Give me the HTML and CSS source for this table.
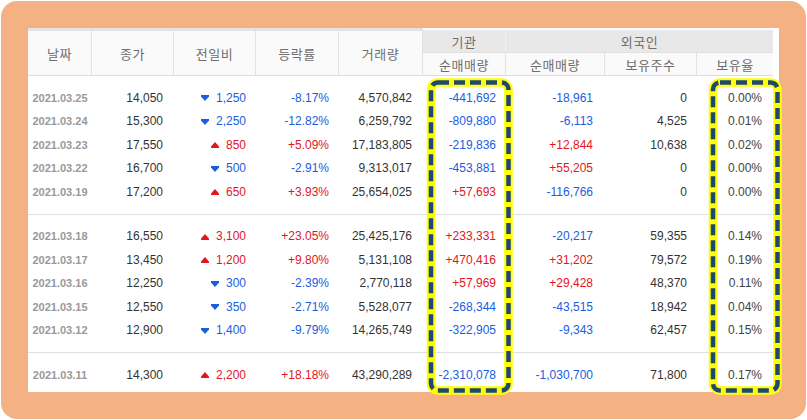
FILE: index.html
```html
<!DOCTYPE html>
<html lang="ko">
<head>
<meta charset="utf-8">
<title>외국인 기관 매매</title>
<link rel="stylesheet" href="styles.css">
</head>
<body>
<div class="frame">
  <div class="panel">
    <div class="table">
      <div class="head">
        <div class="hc span">날짜</div>
        <div class="hc span">종가</div>
        <div class="hc span">전일비</div>
        <div class="hc span">등락률</div>
        <div class="hc span">거래량</div>
        <div class="hc grp grp1">기관</div>
        <div class="hc grp grp2">외국인</div>
        <div class="hc sub">순매매량</div>
        <div class="hc sub">순매매량</div>
        <div class="hc sub">보유주수</div>
        <div class="hc sub last">보유율</div>
      </div>

      <div class="body-group">
        <div class="row"><span class="date">2021.03.25</span><span class="c2">14,050</span><span class="chg dn"><svg class="tri" viewBox="0 0 8 6"><path d="M0 0H8V1.5L4 6L0 1.5Z"/></svg>1,250</span><span class="dn">-8.17%</span><span class="c5">4,570,842</span><span class="dn">-441,692</span><span class="c7 dn">-18,961</span><span>0</span><span class="c9">0.00%</span></div>
        <div class="row"><span class="date">2021.03.24</span><span class="c2">15,300</span><span class="chg dn"><svg class="tri" viewBox="0 0 8 6"><path d="M0 0H8V1.5L4 6L0 1.5Z"/></svg>2,250</span><span class="dn">-12.82%</span><span class="c5">6,259,792</span><span class="dn">-809,880</span><span class="c7 dn">-6,113</span><span>4,525</span><span class="c9">0.01%</span></div>
        <div class="row"><span class="date">2021.03.23</span><span class="c2">17,550</span><span class="chg up"><svg class="tri" viewBox="0 0 8 6"><path d="M4 0L8 4.5V6H0V4.5Z"/></svg>850</span><span class="up">+5.09%</span><span class="c5">17,183,805</span><span class="dn">-219,836</span><span class="c7 up">+12,844</span><span>10,638</span><span class="c9">0.02%</span></div>
        <div class="row"><span class="date">2021.03.22</span><span class="c2">16,700</span><span class="chg dn"><svg class="tri" viewBox="0 0 8 6"><path d="M0 0H8V1.5L4 6L0 1.5Z"/></svg>500</span><span class="dn">-2.91%</span><span class="c5">9,313,017</span><span class="dn">-453,881</span><span class="c7 up">+55,205</span><span>0</span><span class="c9">0.00%</span></div>
        <div class="row"><span class="date">2021.03.19</span><span class="c2">17,200</span><span class="chg up"><svg class="tri" viewBox="0 0 8 6"><path d="M4 0L8 4.5V6H0V4.5Z"/></svg>650</span><span class="up">+3.93%</span><span class="c5">25,654,025</span><span class="up">+57,693</span><span class="c7 dn">-116,766</span><span>0</span><span class="c9">0.00%</span></div>
      </div>

      <div class="body-group">
        <div class="row"><span class="date">2021.03.18</span><span class="c2">16,550</span><span class="chg up"><svg class="tri" viewBox="0 0 8 6"><path d="M4 0L8 4.5V6H0V4.5Z"/></svg>3,100</span><span class="up">+23.05%</span><span class="c5">25,425,176</span><span class="up">+233,331</span><span class="c7 dn">-20,217</span><span>59,355</span><span class="c9">0.14%</span></div>
        <div class="row"><span class="date">2021.03.17</span><span class="c2">13,450</span><span class="chg up"><svg class="tri" viewBox="0 0 8 6"><path d="M4 0L8 4.5V6H0V4.5Z"/></svg>1,200</span><span class="up">+9.80%</span><span class="c5">5,131,108</span><span class="up">+470,416</span><span class="c7 up">+31,202</span><span>79,572</span><span class="c9">0.19%</span></div>
        <div class="row"><span class="date">2021.03.16</span><span class="c2">12,250</span><span class="chg dn"><svg class="tri" viewBox="0 0 8 6"><path d="M0 0H8V1.5L4 6L0 1.5Z"/></svg>300</span><span class="dn">-2.39%</span><span class="c5">2,770,118</span><span class="up">+57,969</span><span class="c7 up">+29,428</span><span>48,370</span><span class="c9">0.11%</span></div>
        <div class="row"><span class="date">2021.03.15</span><span class="c2">12,550</span><span class="chg dn"><svg class="tri" viewBox="0 0 8 6"><path d="M0 0H8V1.5L4 6L0 1.5Z"/></svg>350</span><span class="dn">-2.71%</span><span class="c5">5,528,077</span><span class="dn">-268,344</span><span class="c7 dn">-43,515</span><span>18,942</span><span class="c9">0.04%</span></div>
        <div class="row"><span class="date">2021.03.12</span><span class="c2">12,900</span><span class="chg dn"><svg class="tri" viewBox="0 0 8 6"><path d="M0 0H8V1.5L4 6L0 1.5Z"/></svg>1,400</span><span class="dn">-9.79%</span><span class="c5">14,265,749</span><span class="dn">-322,905</span><span class="c7 dn">-9,343</span><span>62,457</span><span class="c9">0.15%</span></div>
      </div>

      <div class="body-group last">
        <div class="row"><span class="date">2021.03.11</span><span class="c2">14,300</span><span class="chg up"><svg class="tri" viewBox="0 0 8 6"><path d="M4 0L8 4.5V6H0V4.5Z"/></svg>2,200</span><span class="up">+18.18%</span><span class="c5">43,290,289</span><span class="dn">-2,310,078</span><span class="c7 dn">-1,030,700</span><span>71,800</span><span class="c9">0.17%</span></div>
      </div>
    </div>
  </div>
</div>

<svg class="marks" viewBox="0 0 807 420" width="807" height="420">
  <rect class="hl-y" x="431" y="82.5" width="77.5" height="308" rx="7"/>
  <rect class="hl-n" x="431" y="82.5" width="77.5" height="308" rx="7"/>
  <rect class="hl-y" x="713" y="82.5" width="64.5" height="308" rx="7"/>
  <rect class="hl-n" x="713" y="82.5" width="64.5" height="308" rx="7"/>
</svg>
</body>
</html>
```

FILE: styles.css
```css
html, body {
  margin: 0;
  padding: 0;
  background: #ffffff;
}

body {
  position: relative;
  width: 807px;
  height: 420px;
  overflow: hidden;
}

.frame {
  margin: 1px;
  width: 805px;
  height: 418px;
  box-sizing: border-box;
  padding: 27px 0 0 27px;
  background: #f4b183;
  border-radius: 16px;
}

.panel {
  width: 751px;
  height: 364px;
  background: #ffffff;
}

.table {
  width: 745px;
}

.head {
  display: grid;
  grid-template-columns: 64px 82px 82px 83px 84px 83px 99px 92px 76px;
  grid-template-rows: 24px 24px;
}

.hc {
  display: flex;
  align-items: center;
  justify-content: center;
  box-sizing: border-box;
  font-family: "Noto Sans CJK KR", "Noto Sans", sans-serif;
  font-size: 13px;
  letter-spacing: 0.5px;
  color: #6e6e6e;
}

.hc.span {
  grid-row: span 2;
  background: #fafafa;
  border-top: 3px solid #e3e3e3;
  border-bottom: 1px solid #dcdcdc;
  border-right: 1px solid #e2e2e2;
}

.hc.grp {
  background: #e8e8e8;
  border-top: 2px solid #ffffff;
}

.hc.grp1 {
  border-right: 1px solid #f2f2f2;
}

.hc.grp2 {
  grid-column: span 3;
}

.hc.sub {
  background: #fafafa;
  border-top: 1px solid #e0e0e0;
  border-bottom: 1px solid #dcdcdc;
  border-right: 1px solid #e2e2e2;
}

.hc.sub.last {
  border-right: none;
}

.body-group {
  padding: 10px 0;
  border-bottom: 1px solid #e0e0e0;
}

.body-group.last {
  padding-bottom: 5.5px;
  border-bottom: none;
}

.row {
  display: grid;
  grid-template-columns: 64px 82px 82px 83px 84px 83px 99px 92px 76px;
  height: 23.5px;
  align-items: center;
  font-family: "Liberation Sans", Arial, sans-serif;
  font-size: 12px;
  color: #333333;
}

.row > span {
  text-align: right;
  padding-right: 10px;
  white-space: nowrap;
}

.row > .date {
  text-align: center;
  padding-right: 0;
  font-size: 11px;
  font-weight: bold;
  color: #999999;
}

.row > .c2,
.row > .c5,
.row > .c9 {
  padding-right: 11px;
}

.row > .c7 {
  padding-right: 12px;
}

.row > .c9 {
  color: #444444;
}

.chg {
  display: flex;
  justify-content: flex-end;
  align-items: center;
}

.tri {
  width: 8px;
  height: 6px;
  margin-right: 7px;
  margin-top: 1px;
}

.dn {
  color: #1a5ddf;
}

.up {
  color: #e2161e;
}

.dn .tri path {
  fill: #1a5ddf;
}

.up .tri path {
  fill: #e2161e;
}

.marks {
  position: absolute;
  left: 0;
  top: 0;
  pointer-events: none;
}

.hl-y {
  fill: none;
  stroke: #ffff00;
  stroke-width: 8.5;
}

.hl-n {
  fill: none;
  stroke: #1f4871;
  stroke-width: 4.5;
  stroke-dasharray: 11 5;
}
```
